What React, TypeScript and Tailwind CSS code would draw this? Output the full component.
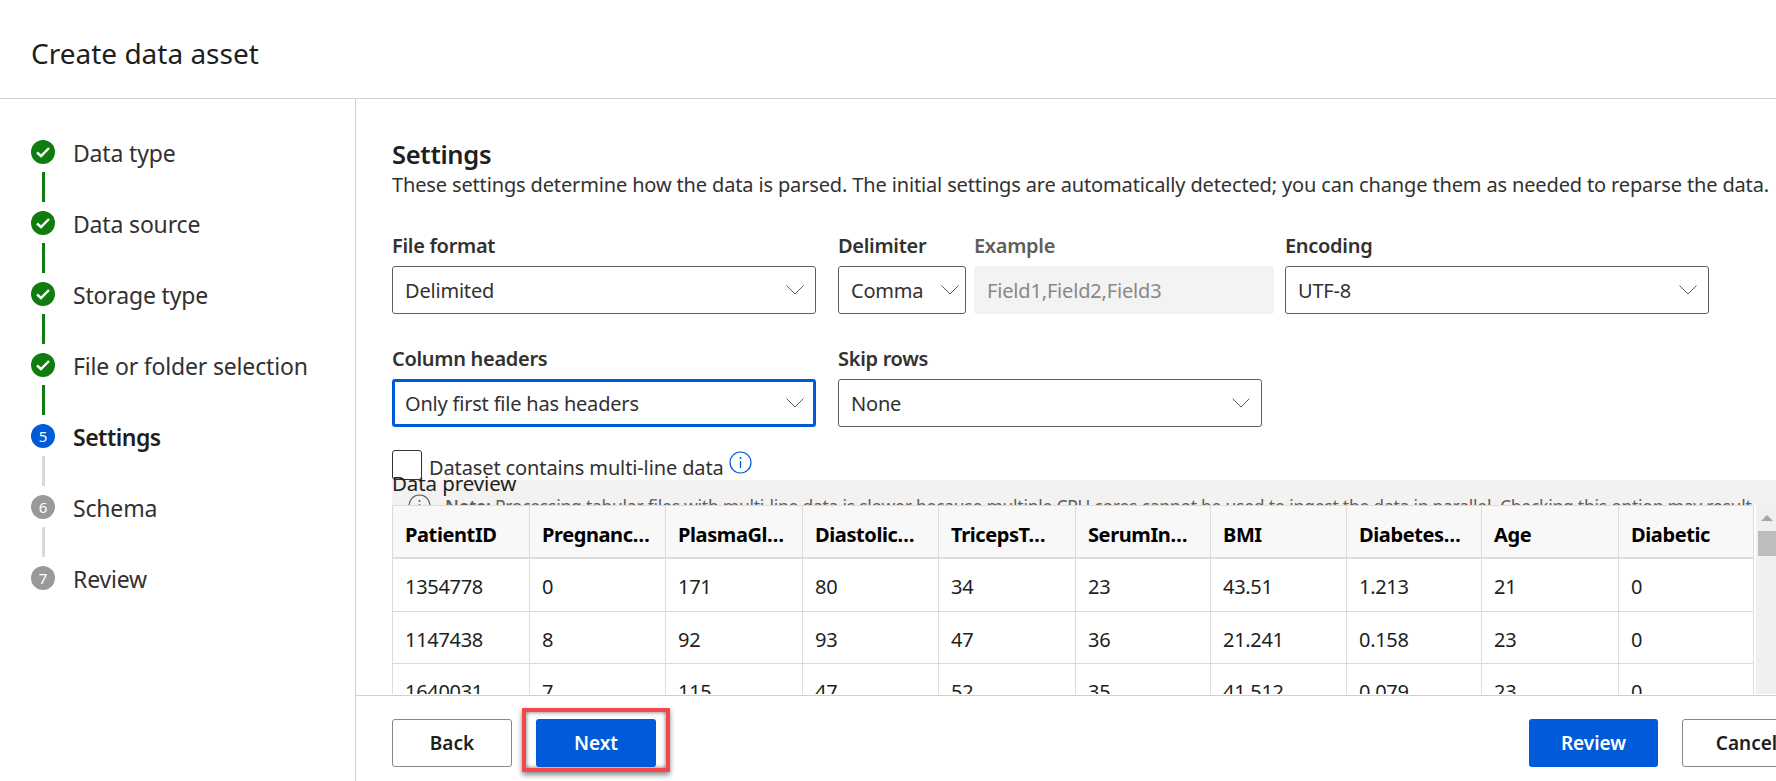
import React from 'react';

const FONT = "font-['Noto_Sans','Open_Sans',sans-serif]";

const STEPS = [
  { label: 'Data type', state: 'done' },
  { label: 'Data source', state: 'done' },
  { label: 'Storage type', state: 'done' },
  { label: 'File or folder selection', state: 'done' },
  { label: 'Settings', state: 'active' },
  { label: 'Schema', state: 'todo' },
  { label: 'Review', state: 'todo' },
];

const COLUMNS = ['PatientID', 'Pregnanc…', 'PlasmaGl…', 'Diastolic…', 'TricepsT…', 'SerumIn…', 'BMI', 'Diabetes…', 'Age', 'Diabetic'];

const ROWS = [
  ['1354778', '0', '171', '80', '34', '23', '43.51', '1.213', '21', '0'],
  ['1147438', '8', '92', '93', '47', '36', '21.241', '0.158', '23', '0'],
  ['1640031', '7', '115', '47', '52', '35', '41.512', '0.079', '23', '0'],
];

const GRID = 'grid grid-cols-[137px_136px_137px_136px_137px_135px_136px_135px_137px_135px]';

const Chevron = () => (
  <svg width="18" height="10" viewBox="0 0 18 10" fill="none" className="shrink-0">
    <path d="M0.5 0.5L9 9L17.5 0.5" stroke="#605e5c" strokeWidth="1" />
  </svg>
);

const StepIcon: React.FC<{ n: number; state: string }> = ({ n, state }) => {
  if (state === 'done') {
    return (
      <div className="flex h-6 w-6 shrink-0 items-center justify-center rounded-full bg-[#107c10]">
        <svg width="16" height="14" viewBox="0 0 16 14" fill="none">
          <path d="M2 7.5L6 11L14 3" stroke="white" strokeWidth="2.4" />
        </svg>
      </div>
    );
  }
  return (
    <div
      className={
        'flex h-6 w-6 shrink-0 items-center justify-center rounded-full text-[15px] text-white ' +
        (state === 'active' ? 'bg-[#005bd9]' : 'bg-[#999999]')
      }
    >
      {n}
    </div>
  );
};

const Stepper = () => (
  <aside className="w-[356px] shrink-0 border-r border-[#d2d0ce] pl-[31px] pt-[41px]">
    {STEPS.map((step, i) => (
      <div key={step.label} className="h-[71px]">
        <div className="flex h-6 items-center">
          <StepIcon n={i + 1} state={step.state} />
          <span
            className={
              'ml-[18px] mt-[2px] whitespace-nowrap text-[23px] ' +
              (step.state === 'active' ? 'font-semibold tracking-[-0.5px] text-[#201f1e]' : 'tracking-[-0.17px] text-[#323130]')
            }
          >
            {step.label}
          </span>
        </div>
        {i < STEPS.length - 1 && (
          <div
            className={
              'ml-[11px] mt-[8px] h-[30px] w-[3px] ' +
              (step.state === 'done' ? 'bg-[#107c10]' : 'bg-[#d9d9d9]')
            }
          />
        )}
      </div>
    ))}
  </aside>
);

const Select: React.FC<{ value: string; className: string; focused?: boolean }> = ({ value, className, focused }) => (
  <div
    className={
      'flex h-12 items-center justify-between rounded-[3px] bg-white text-[20px] text-[#323130] ' +
      (focused ? 'border-[3px] border-[#005bd9] pl-[10px] pr-[9px] ' : 'border border-[#605e5c] pl-[12px] pr-[11px] ') +
      className
    }
  >
    <span className="mt-[2px] whitespace-nowrap tracking-[-0.2px]">{value}</span>
    <Chevron />
  </div>
);

const Label: React.FC<{ children: React.ReactNode; muted?: boolean }> = ({ children, muted }) => (
  <div className={'mb-[7px] h-[27px] whitespace-nowrap text-[20px] font-semibold leading-[27px] tracking-[-0.3px] ' + (muted ? 'text-[#605e5c]' : 'text-[#323130]')}>
    {children}
  </div>
);

const InfoIcon: React.FC<{ color: string }> = ({ color }) => (
  <svg width="23" height="23" viewBox="0 0 23 23" fill="none" className="shrink-0">
    <circle cx="11.5" cy="11.5" r="10.5" stroke={color} strokeWidth="1.2" />
    <path d="M11.5 10V17" stroke={color} strokeWidth="1.3" />
    <circle cx="11.5" cy="7" r="1" fill={color} />
  </svg>
);

const DataTable = () => (
  <div className="flex h-[189px] overflow-hidden bg-white">
    <div className="w-[1361px] shrink-0 border-l border-t border-[#dcdcdc] text-[#201f1e]">
      <div className={GRID + ' h-[53px] bg-[#f8f8f8]'}>
        {COLUMNS.map((col) => (
          <div key={col} className="flex items-center whitespace-nowrap border-b-2 border-r border-[#dcdcdc] pl-[12px] pt-[6px] text-[20px] font-bold tracking-[-0.4px] text-black">
            {col}
          </div>
        ))}
      </div>
      {ROWS.map((row) => (
        <div key={row[0]} className={GRID + ' h-[52.5px]'}>
          {row.map((cell, i) => (
            <div key={i} className="flex items-center border-b border-r border-[#dcdcdc] pl-[12px] pt-[5px] text-[20px] tracking-[-0.3px]">
              {cell}
            </div>
          ))}
        </div>
      ))}
    </div>
    <div className="ml-[3px] flex flex-1 flex-col bg-[#f0f0f0] pl-[2px]">
      <div className="flex h-[26px] items-center justify-center">
        <div className="h-0 w-0 border-x-[6px] border-b-[6px] border-x-transparent border-b-[#a6a6a6]" />
      </div>
      <div className="h-[25px] bg-[#bdbdbd]" />
    </div>
  </div>
);

const SettingsForm = () => (
  <div className="h-[596px] overflow-hidden pl-9 pt-[38px]">
    <h2 className="h-[34px] text-[25.5px] font-semibold leading-[34px] tracking-[-0.3px] text-[#201f1e]">Settings</h2>
    <p className="h-[28px] whitespace-nowrap text-[20px] leading-[28px] tracking-[-0.145px] text-[#323130]">
      These settings determine how the data is parsed. The initial settings are automatically detected; you can change them as needed to reparse the data.
    </p>

    <div className="mt-[33px] flex">
      <div className="w-[446px]">
        <Label>File format</Label>
        <Select value="Delimited" className="w-[424px]" />
      </div>
      <div className="w-[136px]">
        <Label>Delimiter</Label>
        <Select value="Comma" className="w-[128px] !pr-[6px]" />
      </div>
      <div className="w-[311px]">
        <Label muted>Example</Label>
        <div className="flex h-12 w-[300px] items-center rounded-[3px] bg-[#f3f3f3] pl-[13px] pt-[2px] text-[20px] tracking-[-0.17px] text-[#8a8886]">
          Field1,Field2,Field3
        </div>
      </div>
      <div>
        <Label>Encoding</Label>
        <Select value="UTF-8" className="w-[424px]" />
      </div>
    </div>

    <div className="mt-[31px] flex">
      <div className="w-[446px]">
        <Label>Column headers</Label>
        <Select value="Only first file has headers" className="w-[424px]" focused />
      </div>
      <div>
        <Label>Skip rows</Label>
        <Select value="None" className="w-[424px]" />
      </div>
    </div>

    <div className="mt-[23px] flex h-[30px] items-start">
      <div className="relative z-0 h-[30px] w-[30px] shrink-0 rounded-[3px] border border-[#323130] bg-white" />
      <span className="ml-[7px] mt-[3px] whitespace-nowrap text-[20px] tracking-[-0.12px] text-[#323130]">Dataset contains multi-line data</span>
      <span className="ml-[5px] mt-[1px]">
        <InfoIcon color="#005bd9" />
      </span>
    </div>

    <div className="relative">
      <div className="flex h-[25px] items-start overflow-hidden bg-[#f3f2f1] pl-[16px] pt-[14px]">
        <InfoIcon color="#605e5c" />
        <span className="ml-[14px] mt-[-1px] whitespace-nowrap text-[17.5px] tracking-[-0.25px] text-[#605e5c]">
          <b className="font-semibold">Note:</b> Processing tabular files with multi-line data is slower because multiple CPU cores cannot be used to ingest the data in parallel. Checking this option may result
        </span>
      </div>
      <div className="absolute left-0 top-[-10px] text-[20.5px] leading-[27px] tracking-[-0.1px] text-[#201f1e]">Data preview</div>
      <DataTable />
    </div>
  </div>
);

const Footer = () => (
  <footer className="flex h-[87px] items-start justify-between overflow-hidden border-t border-[#d2d0ce] pl-9 pt-[23px]">
    <div className="flex">
      <button className="h-12 w-[120px] rounded-[3px] border border-[#8a8886] bg-white text-[19px] font-semibold text-[#201f1e]">Back</button>
      <div className="ml-[10px] mt-[-11px] border-[4px] border-[#f1474d] px-[10px] pb-[1px] pt-[7px] shadow-[0_3px_5px_rgba(0,0,0,0.45),inset_0_0_4px_rgba(0,0,0,0.6)]">
        <button className="block h-12 w-[120px] rounded-[3px] bg-[#005bd9] text-[19px] font-semibold text-white">Next</button>
      </div>
    </div>
    <div className="flex shrink-0 gap-6">
      <button className="h-12 w-[129px] rounded-[3px] bg-[#005bd9] text-[19px] font-semibold text-white">Review</button>
      <button className="mr-[-35px] h-12 w-[129px] rounded-[3px] border border-[#8a8886] bg-white text-[19px] font-semibold text-[#201f1e]">Cancel</button>
    </div>
  </footer>
);

export default function App() {
  return (
    <div className={FONT + ' flex h-[781px] w-[1776px] flex-col overflow-hidden bg-white'}>
      <header className="flex h-[99px] shrink-0 items-center border-b border-[#d2d0ce] pl-[31px] pt-[7px]">
        <h1 className="text-[28px] text-[#201f1e]">Create data asset</h1>
      </header>
      <div className="flex flex-1 overflow-hidden">
        <Stepper />
        <main className="w-[1420px] shrink-0">
          <SettingsForm />
          <Footer />
        </main>
      </div>
    </div>
  );
}
